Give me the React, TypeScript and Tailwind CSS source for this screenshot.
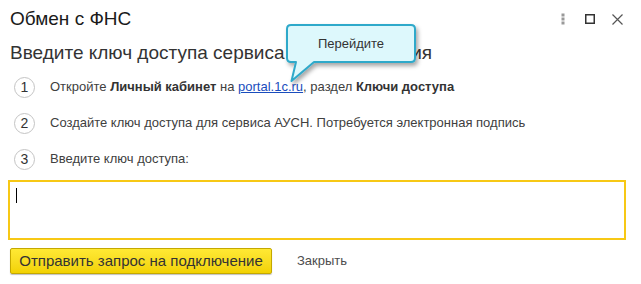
import React from 'react';

const Step: React.FC<{ n: number; children: React.ReactNode }> = ({ n, children }) => (
    <div className="flex items-center h-[36px] pl-[14px]">
        <div className="w-[21px] h-[21px] rounded-full border border-[#c4c4c4] flex items-center justify-center text-[14px] text-[#333]">
            {n}
        </div>
        <div className="ml-[15px] text-[13px] text-[#404040]">{children}</div>
    </div>
);

const Tooltip: React.FC = () => {
    return (
        <div className="absolute left-[280px] top-[18px] w-[150px] h-[70px]">
            <svg width="150" height="70" viewBox="0 0 150 70" className="absolute left-0 top-0">
                <defs>
                    <filter id="sh" x="-20%" y="-20%" width="140%" height="160%">
                        <feDropShadow dx="2" dy="3" stdDeviation="2" floodColor="#000" floodOpacity="0.35" />
                    </filter>
                </defs>
                <path
                    d="M11 7 H131 Q135 7 135 11 V40 Q135 44 131 44 H34 L11.5 63 L16 44 H11 Q7 44 7 40 V11 Q7 7 11 7 Z"
                    fill="#ddf8fc"
                    stroke="#2fa9ca"
                    strokeWidth="2"
                    strokeLinejoin="round"
                    filter="url(#sh)"
                />
            </svg>
            <div className="absolute left-[7px] top-[18px] w-[128px] text-center text-[13px] leading-[16px] text-[#333]">
                Перейдите
            </div>
        </div>
    );
};

const App: React.FC = () => {
    return (
        <div className="relative w-[641px] h-[284px] bg-white overflow-hidden text-[#333] font-['Liberation_Sans',Arial,sans-serif]">
            {/* Header */}
            <div className="flex items-center justify-between h-[38px] pl-[10px] pr-[18px]">
                <div className="text-[19px] leading-[24px] text-[#1a1a1a]">Обмен с ФНС</div>
                <div className="flex items-center">
                    <svg width="4" height="12" viewBox="0 0 4 12">
                        <rect x="0.5" y="0.5" width="3" height="3" fill="#999" />
                        <rect x="0.5" y="4.5" width="3" height="3" fill="#999" />
                        <rect x="0.5" y="8.5" width="3" height="3" fill="#999" />
                    </svg>
                    <svg width="10" height="10" viewBox="0 0 10 10" className="ml-[20px]">
                        <rect x="0.75" y="0.75" width="8.5" height="8.5" fill="none" stroke="#333" strokeWidth="1.5" />
                    </svg>
                    <svg width="11" height="11" viewBox="0 0 11 11" className="ml-[17px]">
                        <path d="M0.5 0.5 L10.5 10.5 M10.5 0.5 L0.5 10.5" stroke="#555" strokeWidth="1.2" />
                    </svg>
                </div>
            </div>

            {/* Subtitle (middle part sits under the tooltip) */}
            <div className="pl-[10px] mt-[4px] text-[19px] leading-[22px] text-[#333]">
                Введите ключ доступа сервиса для соединения
            </div>

            {/* Steps */}
            <div className="mt-[5px] flex flex-col">
                <Step n={1}>
                    Откройте <b className="text-[#333]">Личный кабинет</b> на{' '}
                    <span className="text-[#1a4dbd] underline">portal.1c.ru</span>, раздел{' '}
                    <b className="text-[#333]">Ключи доступа</b>
                </Step>
                <Step n={2}>Создайте ключ доступа для сервиса АУСН. Потребуется электронная подпись</Step>
                <Step n={3}>Введите ключ доступа:</Step>
            </div>

            {/* Input */}
            <div className="mt-[3px] ml-[8px] w-[618px] h-[60px] border-[2.5px] border-[#f7c815] bg-white relative">
                <div className="absolute left-[6px] top-[6px] w-px h-[15px] bg-black" />
            </div>

            {/* Buttons */}
            <div className="flex items-center mt-[8px] pl-[10px]">
                <div className="w-[262px] h-[26px] flex items-center justify-center border border-[#c4a800] rounded-[2px] bg-gradient-to-b from-[#ffe933] to-[#f2d200] shadow-[0_1px_1px_rgba(0,0,0,0.25)] text-[15px] text-[#333]">
                    Отправить запрос на подключение
                </div>
                <div className="ml-[25px] text-[13px] text-[#4d4d4d]">Закрыть</div>
            </div>

            <Tooltip />
        </div>
    );
};

export default App;
